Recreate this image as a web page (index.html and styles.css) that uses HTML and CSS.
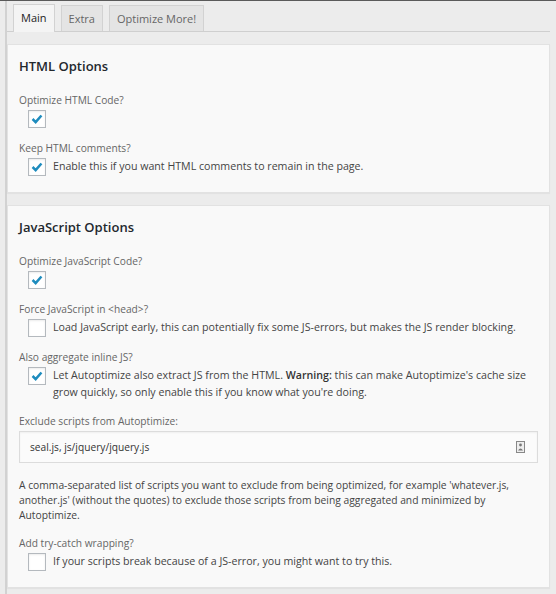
FILE: index.html
```html
<!DOCTYPE html>
<html>
<head>
<meta charset="utf-8">
<link rel="stylesheet" href="styles.css">
</head>
<body>
<div class="page">
  <div class="tabs">
    <div class="tab active">Main</div>
    <div class="tab">Extra</div>
    <div class="tab">Optimize More!</div>
  </div>

  <div class="box">
    <h2>HTML Options</h2>
    <div class="field">
      <div class="label">Optimize HTML Code?</div>
      <div class="row">
        <span class="cb checked"><svg viewBox="0 0 18 18"><polyline points="4,9 7.5,12.5 14,5"/></svg></span>
      </div>
    </div>
    <div class="field">
      <div class="label">Keep HTML comments?</div>
      <div class="row">
        <span class="cb checked"><svg viewBox="0 0 18 18"><polyline points="4,9 7.5,12.5 14,5"/></svg></span>
        <span class="desc">Enable this if you want HTML comments to remain in the page.</span>
      </div>
    </div>
  </div>

  <div class="box">
    <h2>JavaScript Options</h2>
    <div class="field">
      <div class="label">Optimize JavaScript Code?</div>
      <div class="row">
        <span class="cb checked"><svg viewBox="0 0 18 18"><polyline points="4,9 7.5,12.5 14,5"/></svg></span>
      </div>
    </div>
    <div class="field">
      <div class="label">Force JavaScript in &lt;head&gt;?</div>
      <div class="row">
        <span class="cb"></span>
        <span class="desc">Load JavaScript early, this can potentially fix some JS-errors, but makes the JS render blocking.</span>
      </div>
    </div>
    <div class="field">
      <div class="label">Also aggregate inline JS?</div>
      <div class="row">
        <span class="cb checked"><svg viewBox="0 0 18 18"><polyline points="4,9 7.5,12.5 14,5"/></svg></span>
        <span class="desc">Let Autoptimize also extract JS from the HTML. <b>Warning:</b> this can make Autoptimize's cache size grow quickly, so only enable this if you know what you're doing.</span>
      </div>
    </div>
    <div class="field">
      <div class="label">Exclude scripts from Autoptimize:</div>
      <div class="input">
        <span class="value">seal.js, js/jquery/jquery.js</span>
        <svg class="pw" viewBox="0 0 9 12"><rect x="0.5" y="0.5" width="8" height="11" fill="#eee" stroke="#888"/><circle cx="4.5" cy="4" r="1.4" fill="#777"/><path d="M2 9.5 Q4.5 5.5 7 9.5 Z" fill="#777"/></svg>
      </div>
      <p class="help">A comma-separated list of scripts you want to exclude from being optimized, for example 'whatever.js, another.js' (without the quotes) to exclude those scripts from being aggregated and minimized by<br>Autoptimize.</p>
    </div>
    <div class="field">
      <div class="label">Add try-catch wrapping?</div>
      <div class="row">
        <span class="cb"></span>
        <span class="desc">If your scripts break because of a JS-error, you might want to try this.</span>
      </div>
    </div>
  </div>
</div>
</body>
</html>
```

FILE: styles.css
```css
html, body {
  margin: 0;
  padding: 0;
}
body {
  background: #ececec;
  border-top: 1px solid #5a5a5a;
  font-family: "Open Sans", "Noto Sans", sans-serif;
  color: #444;
  height: 593px;
  overflow: hidden;
}
.page {
  margin-left: 5px;
  border-left: 2px solid #d2d2d2;
  padding: 3px 6px 0 0;
  height: 590px;
}
.tabs {
  display: flex;
  gap: 6px;
  padding-left: 6px;
  border-bottom: 1px solid #cfcfcf;
  height: 27px;
  align-items: flex-end;
}
.tab {
  height: 26px;
  line-height: 26px;
  padding: 0 7px;
  border: 1px solid #d2d2d2;
  border-bottom: none;
  background: #e4e4e4;
  color: #666;
  font-size: 11px;
  box-sizing: border-box;
}
.tab.active {
  background: #f4f4f4;
  color: #222;
  height: 28px;
  margin-bottom: -1px;
}
.box {
  margin-top: 12px;
  background: #f9f9f9;
  border: 1px solid #e2e2e2;
  box-shadow: 0 1px 1px rgba(0,0,0,0.04);
  padding: 12px 11px 16px;
}
h2 {
  margin: 0 0 17px;
  font-size: 13px;
  line-height: 18px;
  font-weight: 600;
  color: #23282d;
}
.field {
  margin-bottom: 12px;
}
.field:last-child {
  margin-bottom: 0;
}
.label {
  font-size: 10.2px;
  line-height: 16px;
  color: #666;
}
.row {
  display: flex;
  align-items: flex-start;
  margin-top: 2px;
  padding-left: 9px;
}
.cb {
  flex: none;
  width: 18px;
  height: 18px;
  box-sizing: border-box;
  border: 1px solid #b4b9be;
  background: #fff;
  box-shadow: inset 0 1px 2px rgba(0,0,0,0.08);
  display: flex;
  align-items: center;
  justify-content: center;
}
.cb svg {
  width: 18px;
  height: 18px;
}
.cb polyline {
  fill: none;
  stroke: #1e8cbe;
  stroke-width: 2.8;
}
.desc {
  margin-left: 7px;
  font-size: 10.65px;
  line-height: 17px;
  color: #444;
}
.desc b {
  font-weight: 600;
  color: #333;
}
.input {
  margin-top: 2px;
  height: 32px;
  box-sizing: border-box;
  border: 1px solid #dcdcdc;
  background: #fbfbfb;
  box-shadow: inset 0 1px 2px rgba(0,0,0,0.05);
  display: flex;
  align-items: center;
  justify-content: space-between;
  padding: 0 12px 0 10px;
}
.value {
  font-size: 10.2px;
  color: #333;
}
.pw {
  width: 9px;
  height: 12px;
}
.help {
  margin: 15px 0 0;
  font-size: 10.3px;
  line-height: 15px;
  color: #444;
}
```
